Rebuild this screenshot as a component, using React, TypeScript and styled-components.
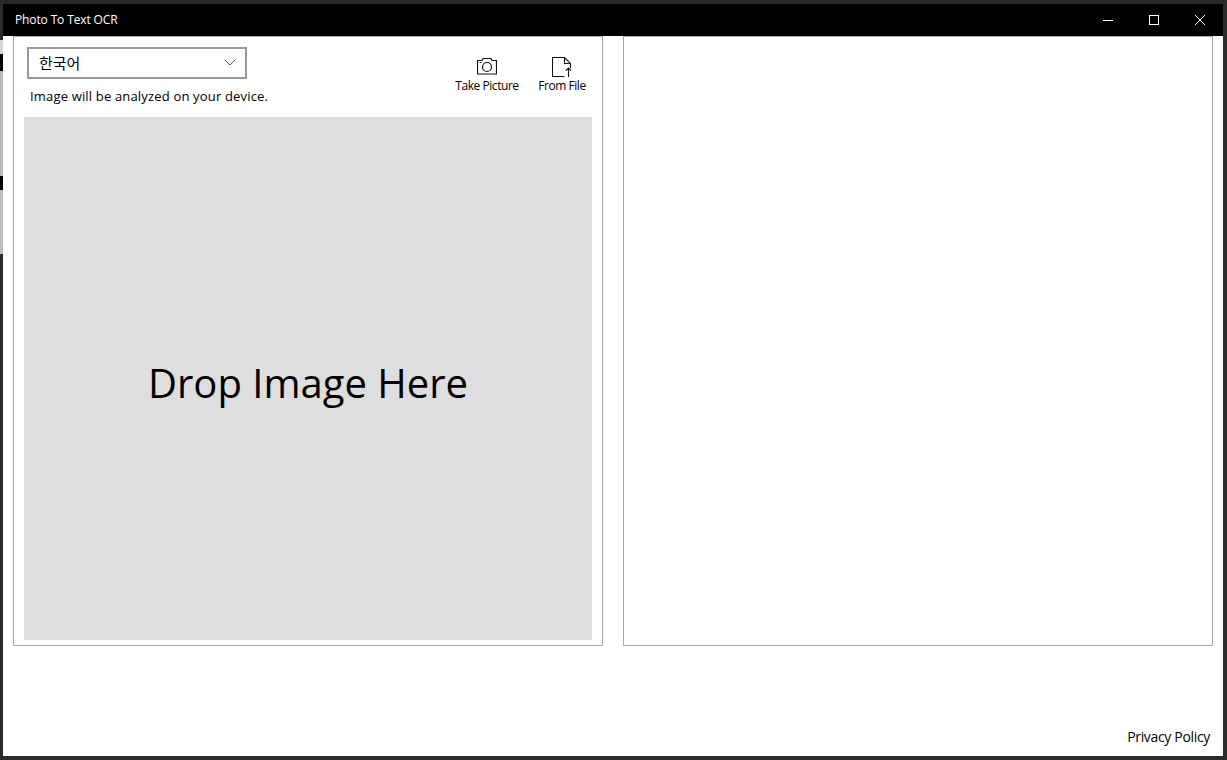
import React from 'react';
import styled, { createGlobalStyle } from 'styled-components';

const GlobalStyle = createGlobalStyle`
  html, body {
    margin: 0;
    padding: 0;
    background: #2b2b2b;
  }
  * {
    box-sizing: border-box;
  }
`;

const uiFont = `"Open Sans", "Noto Sans", "Noto Sans CJK KR", sans-serif`;

const Desktop = styled.div`
  width: 1227px;
  height: 760px;
  overflow: hidden;
  display: flex;
  background: #2b2b2b;
  font-family: ${uiFont};
  color: #000;
`;

const BehindStrip = styled.div`
  flex: 0 0 3px;
  padding-top: 40px;
  display: flex;
  flex-direction: column;
`;

const BehindPiece = styled.div<{ $h: number; $c: string }>`
  height: ${(p) => p.$h}px;
  background: ${(p) => p.$c};
`;

const Window = styled.div`
  width: 1220px;
  margin: 4px 0 4px;
  display: flex;
  flex-direction: column;
  background: #fff;
`;

const TitleBar = styled.div`
  flex: 0 0 32px;
  display: flex;
  align-items: center;
  background: #000;
  color: #fff;
`;

const Title = styled.div`
  flex: 1;
  padding: 0 0 2px 12px;
  font-size: 12px;
  letter-spacing: -0.13px;
`;

const WinButton = styled.div`
  width: 46px;
  height: 32px;
  display: flex;
  align-items: center;
  justify-content: center;
`;

const Panels = styled.div`
  display: grid;
  grid-template-columns: 590px 590px;
  column-gap: 20px;
  padding: 0 10px;
  height: 610px;
`;

const Panel = styled.section`
  border: 1px solid #a6a6a6;
  display: flex;
  flex-direction: column;
`;

const PanelHead = styled.div`
  flex: 0 0 80px;
  display: flex;
  justify-content: space-between;
  padding: 10px 3px 0 13px;
`;

const LangColumn = styled.div`
  display: flex;
  flex-direction: column;
`;

const LangSelect = styled.div`
  width: 220px;
  height: 32px;
  border: 2px solid #999;
  display: flex;
  align-items: center;
  justify-content: space-between;
  padding: 0 9px 2px 10px;
  font-size: 15px;
`;

const Hint = styled.div`
  margin: 8px 0 0 3px;
  font-size: 13px;
  line-height: 18px;
  letter-spacing: 0.17px;
`;

const Actions = styled.div`
  display: flex;
  column-gap: 1px;
  padding-top: 4px;
`;

const Action = styled.div`
  width: 74px;
  display: flex;
  flex-direction: column;
  align-items: center;
  font-size: 12px;
  line-height: 16px;
  letter-spacing: -0.45px;
  white-space: nowrap;
`;

const ActionIcon = styled.div`
  height: 26px;
  display: flex;
  align-items: flex-end;
  justify-content: center;
  margin-bottom: 1px;
`;

const DropArea = styled.div`
  flex: 1;
  margin: 0 10px 5px;
  padding-top: 8px;
  background: #dedede;
  display: flex;
  align-items: center;
  justify-content: center;
  font-size: 40px;
`;

const Footer = styled.div`
  flex: 1;
  display: flex;
  align-items: flex-end;
  justify-content: flex-end;
  padding: 0 13px 9px 0;
  font-size: 14px;
  line-height: 20px;
  letter-spacing: -0.33px;
`;

const Minimize = () => (
  <svg width="10" height="10" viewBox="0 0 10 10">
    <path d="M0 5.5h10" stroke="#fff" fill="none" />
  </svg>
);

const Maximize = () => (
  <svg width="10" height="10" viewBox="0 0 10 10">
    <rect x="0.5" y="0.5" width="9" height="9" stroke="#fff" fill="none" />
  </svg>
);

const Close = () => (
  <svg width="10" height="10" viewBox="0 0 10 10">
    <path d="M0 0l10 10M10 0L0 10" stroke="#fff" fill="none" />
  </svg>
);

const Chevron = () => (
  <svg width="12" height="7" viewBox="0 0 12 7">
    <path d="M0.5 0.5L6 6l5.5-5.5" stroke="#555" fill="none" />
  </svg>
);

const CameraIcon = () => (
  <svg width="20" height="19" viewBox="0 0 20 19">
    <path
      d="M0.5 2.5h4.5l1-2h8l1 2h4.5v13.5h-19z"
      stroke="#111"
      strokeWidth="1.2"
      fill="none"
    />
    <path d="M2.5 4.5h2" stroke="#111" fill="none" />
    <circle cx="10" cy="9" r="4.5" stroke="#111" strokeWidth="1.2" fill="none" />
  </svg>
);

const FileIcon = () => (
  <svg width="20" height="20" viewBox="0 0 20 20">
    <path
      d="M12.5 19.5H0.5V0.5h12l6 6v4.5M12.5 0.5v6h6"
      stroke="#111"
      strokeWidth="1.1"
      fill="none"
    />
    <path d="M16.5 20v-9M14 13.5l2.5-2.5 2.5 2.5" stroke="#111" strokeWidth="1.1" fill="none" />
  </svg>
);

const behind: [number, string][] = [
  [14, '#d8d8d8'],
  [17, '#000'],
  [105, '#b9b9b9'],
  [14, '#000'],
  [64, '#bdbdbd'],
];

export default function App() {
  return (
    <Desktop>
      <GlobalStyle />
      <BehindStrip>
        {behind.map(([h, c], i) => (
          <BehindPiece key={i} $h={h} $c={c} />
        ))}
      </BehindStrip>
      <Window>
        <TitleBar>
          <Title>Photo To Text OCR</Title>
          <WinButton>
            <Minimize />
          </WinButton>
          <WinButton>
            <Maximize />
          </WinButton>
          <WinButton>
            <Close />
          </WinButton>
        </TitleBar>
        <Panels>
          <Panel>
            <PanelHead>
              <LangColumn>
                <LangSelect>
                  <span>한국어</span>
                  <Chevron />
                </LangSelect>
                <Hint>Image will be analyzed on your device.</Hint>
              </LangColumn>
              <Actions>
                <Action>
                  <ActionIcon>
                    <CameraIcon />
                  </ActionIcon>
                  Take Picture
                </Action>
                <Action>
                  <ActionIcon>
                    <FileIcon />
                  </ActionIcon>
                  From File
                </Action>
              </Actions>
            </PanelHead>
            <DropArea>Drop Image Here</DropArea>
          </Panel>
          <Panel />
        </Panels>
        <Footer>Privacy Policy</Footer>
      </Window>
    </Desktop>
  );
}
